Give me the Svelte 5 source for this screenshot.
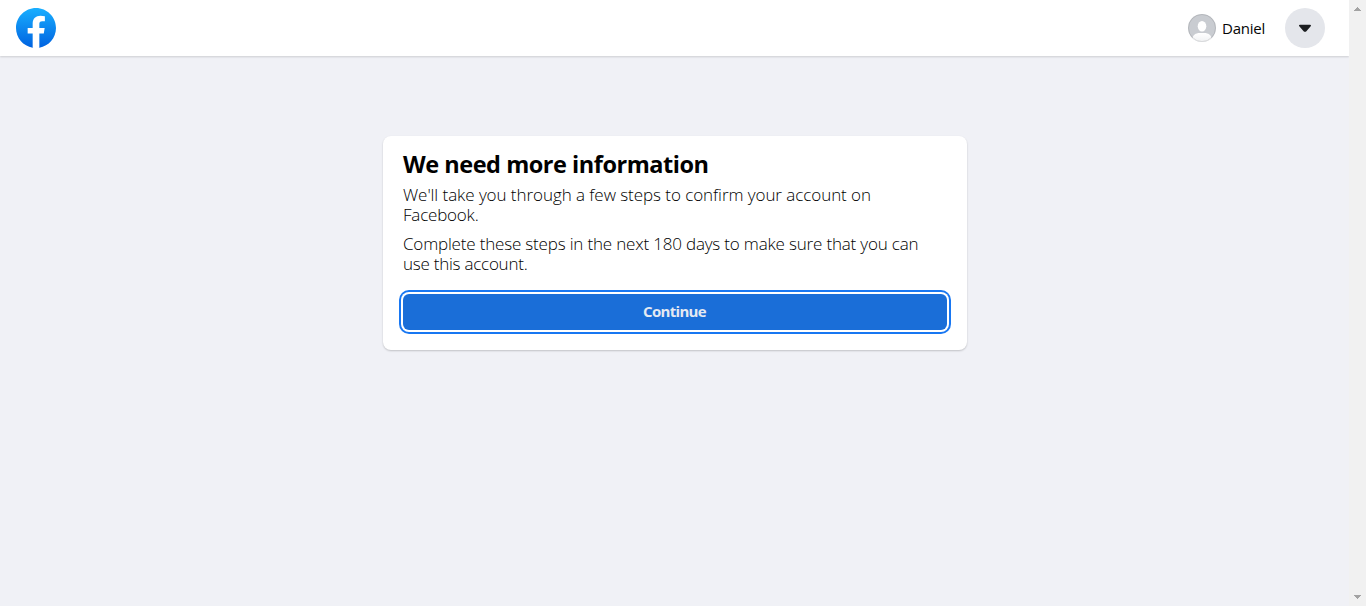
<script>
  const paragraphs = [
    [
      { text: "We'll take you through a few steps to confirm your account on", spacing: -0.06 },
      { text: 'Facebook.', spacing: -0.2 }
    ],
    [
      { text: 'Complete these steps in the next 180 days to make sure that you can', spacing: -0.18 },
      { text: 'use this account.', spacing: -0.24 }
    ]
  ];
</script>

<div class="window">
  <div class="page">
    <header>
      <a class="logo" href="#home" aria-label="Facebook">
        <svg width="40" height="40" viewBox="0 0 36 36">
          <defs>
            <linearGradient id="brand" x1="0" y1="0" x2="0" y2="1">
              <stop offset="0" stop-color="#19afff" />
              <stop offset="1" stop-color="#0062e0" />
            </linearGradient>
          </defs>
          <path fill="url(#brand)" d="M15 35.8C6.5 34.3 0 26.9 0 18 0 8.1 8.1 0 18 0s18 8.1 18 18c0 8.9-6.5 16.3-15 17.8l-1-.8h-4l-1 .8z" />
          <path fill="#fff" d="M25 23l.8-5H21v-3.500c0-1.400.5-2.500 2.700-2.500H26V7.400c-1.300-.2-2.700-.4-4-.4-4.100 0-7 2.500-7 7v4h-4.500v5H15v12.700c1 .2 2 .3 3 .3s2-.1 3-.3V23h4z" />
        </svg>
      </a>
      <div class="account">
        <svg class="avatar" width="28" height="28" viewBox="0 0 28 28">
          <defs>
            <clipPath id="face"><circle cx="14" cy="14" r="14" /></clipPath>
            <linearGradient id="body" x1="0" y1="0" x2="0" y2="1">
              <stop offset="0" stop-color="#fff" />
              <stop offset="1" stop-color="#f0f1f3" />
            </linearGradient>
          </defs>
          <g clip-path="url(#face)">
            <rect width="28" height="28" fill="#c9ccd1" />
            <ellipse cx="14" cy="12.200" rx="4.300" ry="5.200" fill="#fff" />
            <path d="M4.500 28v-3.500c0-3.500 3.500-5.600 7-5.600h5c3.500 0 7 2.100 7 5.600V28z" fill="url(#body)" />
          </g>
          <circle cx="14" cy="14" r="13.500" fill="none" stroke="#000" stroke-opacity=".1" />
        </svg>
        <span class="name">Daniel</span>
        <button class="menu" aria-label="Account">
          <svg width="20" height="20" viewBox="0 0 20 20">
            <path fill="#1c1e21" d="M4.900 6.700h10.200c.9 0 1.200 1 .6 1.600l-4.300 4.900c-.7.8-2.100.8-2.800 0L4.300 8.300c-.6-.6-.3-1.600.6-1.600z" />
          </svg>
        </button>
      </div>
    </header>

    <main>
      <section class="card">
        <h1>We need more information</h1>
        {#each paragraphs as lines}
          <p>
            {#each lines as line}
              <span class="line" style="letter-spacing: {line.spacing}px">{line.text + ' '}</span>
            {/each}
          </p>
        {/each}
        <button class="continue"><span>Continue</span></button>
      </section>
    </main>
  </div>

  <div class="scrollbar">
    <svg width="17" height="17" viewBox="0 0 17 17" shape-rendering="crispEdges"><path fill="#a3a3a3" d="M5 11h7v-1h-1V9h-1V8H9V7H8v1H7v1H6v1H5z" /></svg>
    <svg width="17" height="17" viewBox="0 0 17 17" shape-rendering="crispEdges"><path fill="#a3a3a3" d="M5 6h7v1h-1v1h-1v1H9v1H8V9H7V8H6V7H5z" /></svg>
  </div>
</div>

<style>
  :global(body) {
    margin: 0;
    overflow: hidden;
  }
  .window {
    display: flex;
    height: 606px;
    font-family: 'Open Sans', 'Noto Sans', sans-serif;
    color: #050505;
  }
  .page {
    flex: 1;
    display: flex;
    flex-direction: column;
    background: #f0f1f6;
    overflow: hidden;
  }
  header {
    display: flex;
    justify-content: space-between;
    align-items: center;
    height: 56px;
    box-sizing: border-box;
    padding: 0 24px 0 16px;
    background: #fff;
    box-shadow: 0 1px 2px rgba(0, 0, 0, 0.15);
  }
  .logo,
  .logo svg,
  .avatar {
    display: block;
  }
  .account {
    display: flex;
    align-items: center;
  }
  .name {
    width: 43px;
    margin: 0 20px 1px 6px;
    font-size: 15px;
    line-height: 20px;
    letter-spacing: -0.25px;
    white-space: nowrap;
  }
  .menu {
    display: flex;
    align-items: center;
    justify-content: center;
    width: 40px;
    height: 40px;
    padding: 0;
    border: 0;
    border-radius: 50%;
    background: #e4e6eb;
  }
  main {
    display: flex;
    justify-content: center;
    padding-top: 80px;
  }
  .card {
    width: 584px;
    height: 214px;
    box-sizing: border-box;
    padding: 13px 20px 20px;
    border-radius: 8px;
    background: #fff;
    box-shadow: 0 1px 2px rgba(0, 0, 0, 0.2);
    margin-left: 1px;
  }
  h1 {
    margin: 0 0 6px;
    font-size: 23.5px;
    line-height: 30px;
    font-weight: 700;
    letter-spacing: -0.47px;
    color: #000;
    white-space: nowrap;
  }
  p {
    margin: 0 0 9px;
    font-size: 17px;
    line-height: 20px;
    font-weight: 300;
    color: #000;
  }
  .line {
    display: block;
    white-space: nowrap;
  }
  .continue {
    display: flex;
    align-items: center;
    justify-content: center;
    width: 544px;
    height: 36px;
    margin-top: 20px;
    padding: 0 1px 2px 0;
    border: 0;
    border-radius: 6px;
    background: #1a6ed8;
    box-shadow: 0 0 0 2px #fff, 0 0 0 4px #1877f2;
    color: #e4e9f2;
    font: 700 15px/20px 'Open Sans', 'Noto Sans', sans-serif;
    letter-spacing: -0.7px;
  }
  .scrollbar {
    display: flex;
    flex-direction: column;
    justify-content: space-between;
    width: 17px;
    background: #f1f1f1;
  }
  .scrollbar svg {
    display: block;
  }
</style>
